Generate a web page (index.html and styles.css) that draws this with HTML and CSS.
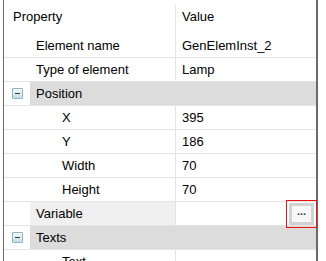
FILE: index.html
```html
<!DOCTYPE html>
<html lang="en">
  <head>
    <meta charset="UTF-8" />
    <title>Properties</title>
    <link rel="stylesheet" href="styles.css">
  </head>
  <body>
    <div class="grid">
      <div class="row head">
        <div class="name">Property</div>
        <div class="value">Value</div>
      </div>
      <div class="row">
        <div class="name lvl1">Element name</div>
        <div class="value">GenElemInst_2</div>
      </div>
      <div class="row">
        <div class="name lvl1">Type of element</div>
        <div class="value">Lamp</div>
      </div>
      <div class="row group">
        <div class="toggle"><span class="minus"></span></div>
        <div class="label">Position</div>
      </div>
      <div class="row">
        <div class="name lvl2">X</div>
        <div class="value">395</div>
      </div>
      <div class="row">
        <div class="name lvl2">Y</div>
        <div class="value">186</div>
      </div>
      <div class="row">
        <div class="name lvl2">Width</div>
        <div class="value">70</div>
      </div>
      <div class="row">
        <div class="name lvl2">Height</div>
        <div class="value">70</div>
      </div>
      <div class="row selected">
        <div class="name lvl1">Variable</div>
        <div class="value edit">
          <button class="dots">...</button>
        </div>
      </div>
      <div class="row group">
        <div class="toggle"><span class="minus"></span></div>
        <div class="label">Texts</div>
      </div>
      <div class="row">
        <div class="name lvl2">Text</div>
        <div class="value"></div>
      </div>
    </div>
  </body>
</html>
```

FILE: styles.css
```css
body { margin: 0; background: #fff; font-family: "Liberation Sans", Arial, sans-serif; font-size: 13px; color: #000; overflow: hidden; }
.grid { margin-left: 3px; width: 312px; border-left: 1px solid #6a6a6a; border-right: 2px solid #6a6a6a; height: 261px; }

.row { display: flex; height: 23px; border-bottom: 1px solid #e4e4e4; line-height: 23px; }
.row .name { width: 172px; flex: none; border-right: 1px solid #e4e4e4; white-space: nowrap; box-sizing: border-box; }
.row .value { flex: 1; padding-left: 6px; position: relative; }

.head { height: 34px; line-height: 34px; border-bottom: none; }
.head .name { padding-left: 9px; border-right: none; position: relative; }
.head .name::after { content: ""; position: absolute; right: 0; top: 5px; bottom: 0; border-right: 1px solid #e4e4e4; }
.head .value { padding-left: 6px; }

.lvl1 { padding-left: 32px; }
.lvl2 { padding-left: 58px; }

.selected .name { background: linear-gradient(to right, #fff 26px, #f0f0f0 26px); }

.group { background: linear-gradient(to right, #fff 26px, #dcdcdc 26px); }
.group .toggle { width: 26px; flex: none; display: flex; align-items: center; padding-left: 8px; box-sizing: border-box; }
.group .label { padding-left: 6px; }
.minus { width: 9px; height: 9px; border: 1px solid #8fb4bf; border-radius: 1px; background: linear-gradient(#f4fbfc, #c6e1e6); position: relative; }
.minus::after { content: ""; position: absolute; left: 2px; right: 2px; top: 4px; height: 1px; background: #2a3a44; }

.dots { position: absolute; right: 2px; top: 1px; width: 25px; height: 22px; padding: 0 0 6px; border: 3px solid #d2d2d2; background: #f7f7f7; font: bold 11px "Liberation Sans", Arial, sans-serif; color: #2a3a6a; line-height: 10px; outline: 1px solid #e11; outline-offset: 2px; }
```
